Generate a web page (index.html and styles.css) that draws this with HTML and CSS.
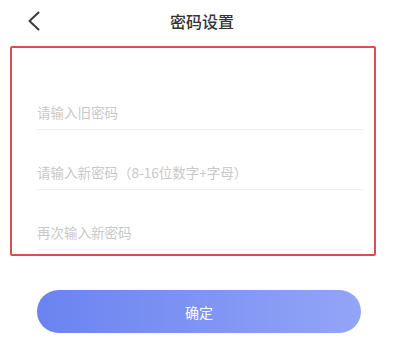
FILE: index.html
```html
<!DOCTYPE html>
<html lang="zh-CN">
<head>
<meta charset="UTF-8" />
<meta name="viewport" content="width=device-width, initial-scale=1" />
<title>密码设置</title>
<link rel="stylesheet" href="styles.css">
</head>
<body>
  <div class="header">
    <span class="back">
      <svg width="16" height="20" viewBox="0 0 16 20">
        <path d="M12.5 1.5 L3.5 10 L12.5 18.5" fill="none" stroke="#3a3a3a" stroke-width="2" stroke-linecap="round" stroke-linejoin="round" />
      </svg>
    </span>
    <h1 class="title">密码设置</h1>
  </div>

  <div class="form">
    <div class="row"><input type="password" placeholder="请输入旧密码" /></div>
    <div class="row"><input type="password" placeholder="请输入新密码（8-16位数字+字母）" /></div>
    <div class="row"><input type="password" placeholder="再次输入新密码" /></div>
  </div>

  <button class="submit">确定</button>
</body>
</html>
```

FILE: styles.css
```css
body {
  margin: 0;
  background: #fff;
  font-family: "Noto Sans CJK SC", "Noto Sans", sans-serif;
  color: #333;
}
.header {
  position: relative;
  height: 42px;
  display: flex;
  align-items: center;
  justify-content: center;
}
.back {
  position: absolute;
  left: 26px;
  top: 11px;
}
.title {
  margin: 0;
  font-size: 16px;
  font-weight: 500;
  color: #333;
}
.form {
  margin: 4px 0 0 10px;
  width: 366px;
  border: 2px solid #d2524c;
  border-radius: 2px;
  padding: 22px 11px 4px 25px;
  box-sizing: border-box;
}
.row {
  padding-top: 26px;
}
.row input {
  display: block;
  width: 100%;
  height: 34px;
  box-sizing: border-box;
  border: none;
  border-bottom: 1px solid #f0f0f0;
  padding: 0 0 2px;
  outline: none;
  font-family: inherit;
  font-size: 13.5px;
  color: #333;
}
.row input::placeholder {
  color: #c9c9c9;
}
.submit {
  display: block;
  margin: 34px 0 0 37px;
  width: 324px;
  height: 43px;
  border: none;
  border-radius: 22px;
  background: linear-gradient(90deg, #6a83f0, #93a5f7);
  color: #fff;
  font-family: inherit;
  font-size: 14px;
}
```
